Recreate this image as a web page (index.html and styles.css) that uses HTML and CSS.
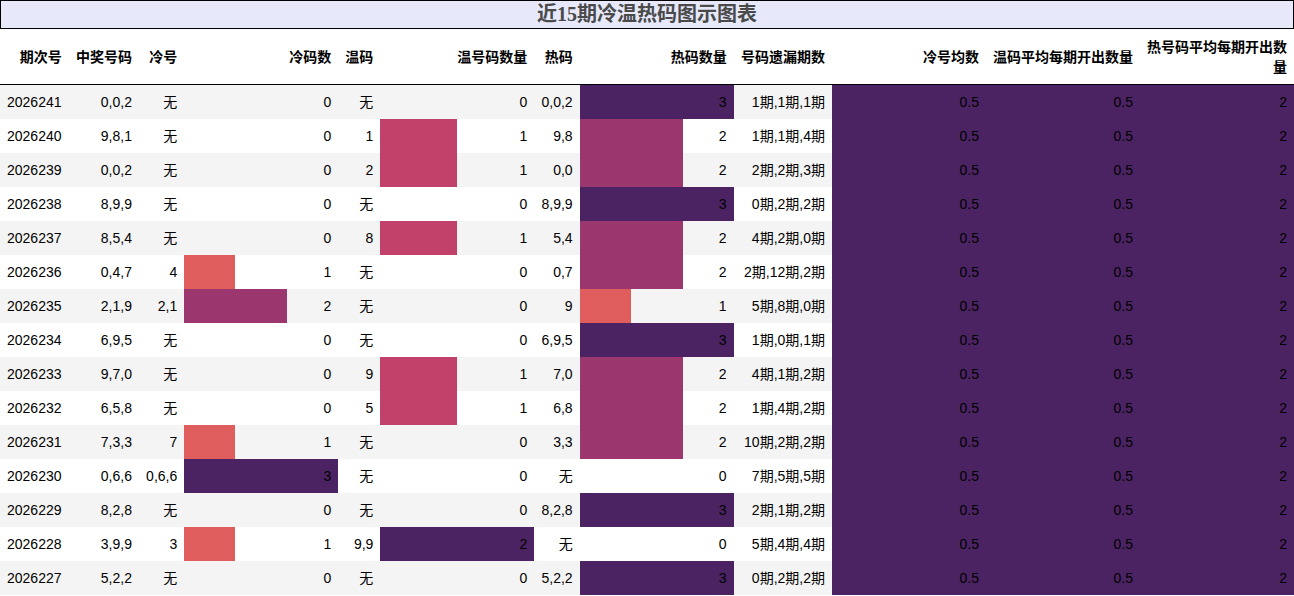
FILE: index.html
```html
<!DOCTYPE html>
<html lang="zh">
<head>
<meta charset="utf-8">
<title>近15期冷温热码图示图表</title>
<link rel="stylesheet" href="styles.css">
</head>
<body>
<div class="title">近15期冷温热码图示图表</div>
<table class="grid">
<thead>
<tr>
<th>期次号</th><th>中奖号码</th><th>冷号</th><th class="w">冷码数</th><th>温码</th><th class="w">温号码数量</th><th>热码</th><th class="w">热码数量</th><th>号码遗漏期数</th><th class="w">冷号均数</th><th class="w">温码平均每期开出数量</th><th class="w">热号码平均每期开出数量</th>
</tr>
</thead>
<tbody>
<tr><td>2026241</td><td>0,0,2</td><td>无</td><td class="w">0</td><td>无</td><td class="w">0</td><td>0,0,2</td><td class="w bar c3" style="--w:100%">3</td><td>1期,1期,1期</td><td class="w full">0.5</td><td class="w full">0.5</td><td class="w full">2</td></tr>
<tr><td>2026240</td><td>9,8,1</td><td>无</td><td class="w">0</td><td>1</td><td class="w bar w1" style="--w:50%">1</td><td>9,8</td><td class="w bar c2" style="--w:66.667%">2</td><td>1期,1期,4期</td><td class="w full">0.5</td><td class="w full">0.5</td><td class="w full">2</td></tr>
<tr><td>2026239</td><td>0,0,2</td><td>无</td><td class="w">0</td><td>2</td><td class="w bar w1" style="--w:50%">1</td><td>0,0</td><td class="w bar c2" style="--w:66.667%">2</td><td>2期,2期,3期</td><td class="w full">0.5</td><td class="w full">0.5</td><td class="w full">2</td></tr>
<tr><td>2026238</td><td>8,9,9</td><td>无</td><td class="w">0</td><td>无</td><td class="w">0</td><td>8,9,9</td><td class="w bar c3" style="--w:100%">3</td><td>0期,2期,2期</td><td class="w full">0.5</td><td class="w full">0.5</td><td class="w full">2</td></tr>
<tr><td>2026237</td><td>8,5,4</td><td>无</td><td class="w">0</td><td>8</td><td class="w bar w1" style="--w:50%">1</td><td>5,4</td><td class="w bar c2" style="--w:66.667%">2</td><td>4期,2期,0期</td><td class="w full">0.5</td><td class="w full">0.5</td><td class="w full">2</td></tr>
<tr><td>2026236</td><td>0,4,7</td><td>4</td><td class="w bar c1" style="--w:33.333%">1</td><td>无</td><td class="w">0</td><td>0,7</td><td class="w bar c2" style="--w:66.667%">2</td><td>2期,12期,2期</td><td class="w full">0.5</td><td class="w full">0.5</td><td class="w full">2</td></tr>
<tr><td>2026235</td><td>2,1,9</td><td>2,1</td><td class="w bar c2" style="--w:66.667%">2</td><td>无</td><td class="w">0</td><td>9</td><td class="w bar c1" style="--w:33.333%">1</td><td>5期,8期,0期</td><td class="w full">0.5</td><td class="w full">0.5</td><td class="w full">2</td></tr>
<tr><td>2026234</td><td>6,9,5</td><td>无</td><td class="w">0</td><td>无</td><td class="w">0</td><td>6,9,5</td><td class="w bar c3" style="--w:100%">3</td><td>1期,0期,1期</td><td class="w full">0.5</td><td class="w full">0.5</td><td class="w full">2</td></tr>
<tr><td>2026233</td><td>9,7,0</td><td>无</td><td class="w">0</td><td>9</td><td class="w bar w1" style="--w:50%">1</td><td>7,0</td><td class="w bar c2" style="--w:66.667%">2</td><td>4期,1期,2期</td><td class="w full">0.5</td><td class="w full">0.5</td><td class="w full">2</td></tr>
<tr><td>2026232</td><td>6,5,8</td><td>无</td><td class="w">0</td><td>5</td><td class="w bar w1" style="--w:50%">1</td><td>6,8</td><td class="w bar c2" style="--w:66.667%">2</td><td>1期,4期,2期</td><td class="w full">0.5</td><td class="w full">0.5</td><td class="w full">2</td></tr>
<tr><td>2026231</td><td>7,3,3</td><td>7</td><td class="w bar c1" style="--w:33.333%">1</td><td>无</td><td class="w">0</td><td>3,3</td><td class="w bar c2" style="--w:66.667%">2</td><td>10期,2期,2期</td><td class="w full">0.5</td><td class="w full">0.5</td><td class="w full">2</td></tr>
<tr><td>2026230</td><td>0,6,6</td><td>0,6,6</td><td class="w bar c3" style="--w:100%">3</td><td>无</td><td class="w">0</td><td>无</td><td class="w">0</td><td>7期,5期,5期</td><td class="w full">0.5</td><td class="w full">0.5</td><td class="w full">2</td></tr>
<tr><td>2026229</td><td>8,2,8</td><td>无</td><td class="w">0</td><td>无</td><td class="w">0</td><td>8,2,8</td><td class="w bar c3" style="--w:100%">3</td><td>2期,1期,2期</td><td class="w full">0.5</td><td class="w full">0.5</td><td class="w full">2</td></tr>
<tr><td>2026228</td><td>3,9,9</td><td>3</td><td class="w bar c1" style="--w:33.333%">1</td><td>9,9</td><td class="w bar w2" style="--w:100%">2</td><td>无</td><td class="w">0</td><td>5期,4期,4期</td><td class="w full">0.5</td><td class="w full">0.5</td><td class="w full">2</td></tr>
<tr><td>2026227</td><td>5,2,2</td><td>无</td><td class="w">0</td><td>无</td><td class="w">0</td><td>5,2,2</td><td class="w bar c3" style="--w:100%">3</td><td>0期,2期,2期</td><td class="w full">0.5</td><td class="w full">0.5</td><td class="w full">2</td></tr>
</tbody>
</table>
</body>
</html>
```

FILE: styles.css
```css
html, body {
  margin: 0;
  padding: 0;
  background: #ffffff;
}

body {
  font-family: "Liberation Sans", "Noto Sans CJK SC", sans-serif;
  font-size: 14px;
  color: #000;
}

.title {
  box-sizing: border-box;
  height: 29px;
  border: 1px solid #000;
  background: #e7e9fb;
  color: #4a4a4a;
  font-family: "Liberation Serif", "Noto Sans CJK SC", serif;
  font-weight: bold;
  font-size: 20px;
  line-height: 27px;
  text-align: center;
}

.grid {
  width: 100%;
  border-collapse: collapse;
  border-spacing: 0;
}

.grid th,
.grid td {
  padding: 7px 7px;
  line-height: 20px;
  text-align: right;
  vertical-align: middle;
  white-space: nowrap;
}

.grid th {
  padding-top: 8px;
  font-weight: bold;
  border-bottom: 1px solid #000;
  background: #fff;
}

.grid th.w {
  white-space: normal;
}

.grid td:first-child {
  text-align: left;
}

.grid .w {
  width: 140px;
}

.grid tbody tr:nth-child(odd) td {
  background-color: #f4f4f4;
}

.grid tbody tr:nth-child(even) td {
  background-color: #ffffff;
}

.grid tbody tr td.bar {
  background-image: linear-gradient(90deg, var(--bar) var(--w), transparent var(--w));
}

.c1 { --bar: #e05d5d; }
.c2 { --bar: #9c366f; }
.c3 { --bar: #4b2362; }
.w1 { --bar: #c2416a; }
.w2 { --bar: #4b2362; }

.grid tbody tr td.full {
  background-color: #4b2362;
}
```
